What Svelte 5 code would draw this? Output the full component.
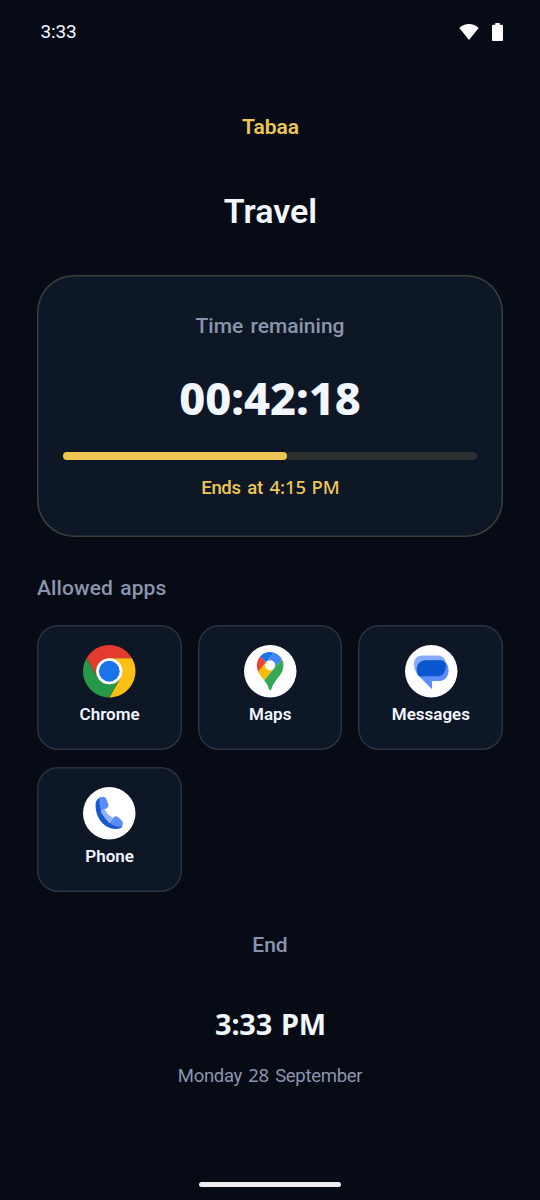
<script>
  const apps = ['Chrome', 'Maps', 'Messages', 'Phone'];
  const progress = 54;
</script>

<div class="screen">
  <header>
    <span class="clock">3:33</span>
    <div class="status">
      <svg width="20" height="18" viewBox="0 0 20 18"><path fill="#fff" d="M.4 5C3 2.300 6.300.900 10 .900S17 2.300 19.600 5L10 17z" /></svg>
      <svg width="11" height="18" viewBox="0 0 11 18"><path fill="#fff" d="M3.300 0h4.400v1.700H10q1 0 1 1V17q0 1-1 1H1q-1 0-1-1V2.700q0-1 1-1h2.300z" /></svg>
    </div>
  </header>

  <div class="brand">Tabaa</div>
  <h1>Travel</h1>

  <section class="timer">
    <div class="label">Time remaining</div>
    <div class="count">00:42:18</div>
    <div class="track"><div class="fill" style="width: {progress}%"></div></div>
    <div class="ends">Ends at <span class="noto">4:15 PM</span></div>
  </section>

  <h2>Allowed apps</h2>
  <div class="grid">
    {#each apps as app}
      <div class="app">
        {#if app === 'Chrome'}
          <svg class="icon" viewBox="0 0 48 48">
            <path fill="#e33b2e" d="M3.220 12A24 24 0 0 1 44.780 12L24 12 24 24 13.610 30z" />
            <path fill="#fcc015" d="M44.780 12A24 24 0 0 1 24 48L34.390 30 24 24V12z" />
            <path fill="#279847" d="M3.220 12A24 24 0 0 0 24 48L34.390 30 24 24 13.610 30z" />
            <circle cx="24" cy="24" r="12" fill="#fff" />
            <circle cx="24" cy="24" r="9.500" fill="#1a73e8" />
          </svg>
        {:else if app === 'Maps'}
          <svg class="icon" viewBox="0 0 159 159">
            <circle cx="79.500" cy="79.500" r="79.500" fill="#fff" />
            <g transform="translate(39 21.500) scale(.87)">
              <path fill="#1a73e8" d="M60.200 2.200C55.800.800 51 0 46.100 0 32 0 19.300 6.400 10.800 16.500l21.800 18.300z" />
              <path fill="#ea4335" d="M10.800 16.500C4.100 24.500 0 34.900 0 46.100c0 8.700 1.700 15.700 4.600 22l28-33.300z" />
              <path fill="#4285f4" d="M46.200 28.500c9.800 0 17.700 7.900 17.700 17.700 0 4.300-1.600 8.300-4.200 11.400 0 0 13.900-16.600 27.500-32.700-5.600-10.800-15.300-19-27-22.700L32.600 34.800c3.300-3.800 8.100-6.300 13.600-6.300" />
              <path fill="#fbbc04" d="M46.200 63.800c-9.800 0-17.700-7.900-17.700-17.700 0-4.300 1.500-8.300 4.100-11.300l-28 33.300c4.800 10.600 12.800 19.200 21 29.900l34.100-40.500c-3.300 3.900-8.100 6.300-13.500 6.300" />
              <path fill="#34a853" d="M59.100 109.200c15.400-24.100 33.300-35 33.300-63 0-7.700-1.900-14.900-5.200-21.300L25.600 98c2.600 3.400 5.300 7.300 7.900 11.300 9.400 14.500 6.800 23.100 12.800 23.100s3.400-8.700 12.800-23.200" />
            </g>
          </svg>
        {:else if app === 'Messages'}
          <svg class="icon" viewBox="0 0 159 159">
            <circle cx="79.500" cy="79.500" r="79.500" fill="#fff" />
            <path fill="#85adff" d="M52 32H97C111 32 120 39 123 51L60 95 36 87Q27 74 27 58C27 42 38 32 52 32z" />
            <path fill="#5b8efc" d="M57 46H108Q116 46 121 51C129 57 132 66 132 76C132 96 121 109 105 109H82V134L38 90Q34 84 34 71z" />
            <path fill="#0b57d0" d="M62 46H108Q117 46 122 53Q124 57 124 62C124 82 113 95 97 95H42Q36 86 36 73C36 57 46 46 62 46z" />
          </svg>
        {:else}
          <svg class="icon" viewBox="0 0 159 159">
            <circle cx="79.500" cy="79.500" r="79.500" fill="#fff" />
            <path fill="#1659cf" d="M54 31C43 35 38 43 38 57C39 95 64 127 99 127C110 127 117 125 119 119L98 106 79 108 56 78 55 66z" />
            <path fill="#8fb2ff" d="M54 70L64 64Q72 83 91 93L80 108Q60 92 54 70z" />
            <path fill="#5a8cfb" d="M50 33Q65 25 70 35L77 52Q79 61 70 65L54 71Q48 51 50 33zM80 108L92 93Q98 86 106 91L118 102Q124 110 117 120Q97 123 80 108z" />
          </svg>
        {/if}
        <span>{app}</span>
      </div>
    {/each}
  </div>

  <div class="end">End</div>
  <div class="now">3:33 PM</div>
  <div class="date">Monday <span class="noto">28</span> September</div>
  <div class="home"></div>
</div>

<style>
  :global(body) { background: #060b16; }
  .screen {
    box-sizing: border-box;
    width: 540px;
    height: 1200px;
    padding: 0 37px;
    overflow: hidden;
    display: flex;
    flex-direction: column;
    background: #060b16;
    color: #f2f6ff;
    font-family: Roboto, sans-serif;
    text-align: center;
    white-space: nowrap;
  }
  header {
    height: 64px;
    display: flex;
    align-items: center;
    justify-content: space-between;
    padding-left: 3.5px;
  }
  .clock { font-size: 19px; line-height: 24px; letter-spacing: -.15px; }
  .status { display: flex; gap: 13px; }
  svg { display: block; overflow: visible; }
  .brand {
    margin-top: 48px;
    padding-left: 1px;
    font-size: 21px;
    line-height: 30px;
    font-weight: 600;
    color: #edc756;
  }
  h1 { margin: 49px 0 0; padding-left: 1px; font-size: 34px; line-height: 40px; font-weight: 600; }
  .timer {
    box-sizing: border-box;
    height: 262px;
    margin-top: 44px;
    padding: 36px 26px 0;
    border-radius: 37px;
    background: #0e1726;
    box-shadow: inset 0 0 0 1.5px #3b3f3a;
  }
  .label { font-size: 21px; line-height: 30px; font-weight: 500; word-spacing: 2px; color: #8a95ad; }
  .count { margin-top: 27px; font: 800 45px/60px "Noto Sans", sans-serif; }
  .track { margin-top: 24px; height: 8px; border-radius: 4px; background: #2b2d2e; }
  .fill { height: 8px; border-radius: 4px; background: #efc653; }
  .ends { margin-top: 15px; padding-left: 1px; font-size: 18.5px; line-height: 26px; font-weight: 500; letter-spacing: -.35px; word-spacing: 2.5px; color: #edc756; }
  .noto { font-family: "Noto Sans", sans-serif; line-height: 0; }
  .ends .noto { letter-spacing: -.1px; word-spacing: 1px; }
  h2 {
    margin: 36px 0 0;
    font-size: 21px;
    line-height: 30px;
    font-weight: 500;
    letter-spacing: .1px;
    word-spacing: 2px;
    text-align: left;
    color: #8a95ad;
  }
  .grid {
    margin-top: 22px;
    display: grid;
    grid-template-columns: repeat(3, 1fr);
    grid-auto-rows: 125px;
    gap: 17px 16px;
  }
  .app {
    box-sizing: border-box;
    display: flex;
    flex-direction: column;
    align-items: center;
    padding: 20px 0 0 .5px;
    border-radius: 21px;
    background: #0e1726;
    box-shadow: inset 0 0 0 1.5px #2b3340;
    font-size: 17px;
    line-height: 22px;
    font-weight: 600;
  }
  .icon { width: 52.5px; height: 52.5px; margin-bottom: 5px; }
  .end { margin-top: 38px; font-size: 21px; line-height: 30px; font-weight: 500; color: #8a95ad; }
  .now { margin-top: 44px; padding-left: 1px; font: 700 29px/40px "Noto Sans", sans-serif; letter-spacing: -.2px; word-spacing: 1.5px; }
  .date { margin-top: 19px; font-size: 18.5px; line-height: 26px; letter-spacing: -.3px; word-spacing: 2px; color: #8a95ad; }
  .home {
    width: 142px;
    height: 5px;
    margin: auto auto 13px;
    border-radius: 3px;
    background: #ececee;
  }
</style>
